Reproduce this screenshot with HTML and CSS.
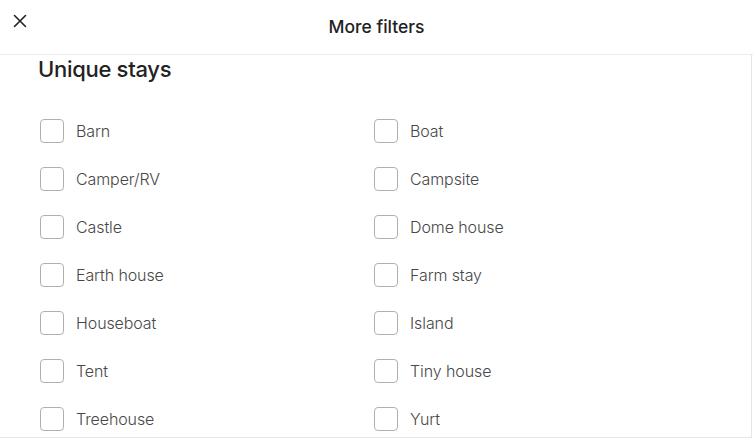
FILE: index.html
```html
<!DOCTYPE html>
<html>
<head>
<meta charset="utf-8">
<link rel="stylesheet" href="styles.css">
</head>
<body>
<div class="modal">
  <header class="header">
    <button class="close" aria-label="Close">
      <svg width="14" height="14" viewBox="0 0 14 14"><path d="M1.5 1.5 L12.5 12.5 M12.5 1.5 L1.5 12.5" stroke="#222" stroke-width="1.6" fill="none" stroke-linecap="round"/></svg>
    </button>
    <div class="title">More filters</div>
  </header>
  <section class="content">
    <h2 class="heading">Unique stays</h2>
    <div class="grid">
      <label class="item"><span class="box"></span><span class="text">Barn</span></label>
      <label class="item"><span class="box"></span><span class="text">Boat</span></label>
      <label class="item"><span class="box"></span><span class="text">Camper/RV</span></label>
      <label class="item"><span class="box"></span><span class="text">Campsite</span></label>
      <label class="item"><span class="box"></span><span class="text">Castle</span></label>
      <label class="item"><span class="box"></span><span class="text">Dome house</span></label>
      <label class="item"><span class="box"></span><span class="text">Earth house</span></label>
      <label class="item"><span class="box"></span><span class="text">Farm stay</span></label>
      <label class="item"><span class="box"></span><span class="text">Houseboat</span></label>
      <label class="item"><span class="box"></span><span class="text">Island</span></label>
      <label class="item"><span class="box"></span><span class="text">Tent</span></label>
      <label class="item"><span class="box"></span><span class="text">Tiny house</span></label>
      <label class="item"><span class="box"></span><span class="text">Treehouse</span></label>
      <label class="item"><span class="box"></span><span class="text">Yurt</span></label>
    </div>
  </section>
</div>
</body>
</html>
```

FILE: styles.css
```css
html, body {
  margin: 0;
  padding: 0;
  background: #fff;
}
body {
  font-family: "Inter", "Open Sans", "Liberation Sans", sans-serif;
  color: #222;
  overflow: hidden;
}
.modal {
  width: 753px;
  height: 443px;
  box-sizing: border-box;
}
.header {
  height: 54px;
  border-bottom: 1px solid #ebebeb;
  display: flex;
  align-items: center;
  justify-content: center;
  position: relative;
}
.close {
  position: absolute;
  left: 13px;
  top: 14px;
  width: 14px;
  height: 14px;
  padding: 0;
  border: 0;
  background: none;
  display: flex;
}
.title {
  font-size: 17.5px;
  font-weight: 500;
  color: #222;
  margin-top: -2px;
  letter-spacing: 0;
}
.content {
  width: 752px;
  height: 383px;
  box-sizing: border-box;
  border-right: 1px solid #e6e6e6;
  border-bottom: 1px solid #e6e6e6;
  padding: 0 0 0 38px;
}
.heading {
  margin: 0;
  padding-top: 2px;
  font-size: 22px;
  line-height: 24px;
  font-weight: 500;
  color: #222;
  letter-spacing: -0.3px;
}
.grid {
  display: grid;
  grid-template-columns: 334px 334px;
  grid-auto-rows: 48px;
  margin-top: 38px;
  margin-left: 2px;
}
.item {
  display: flex;
  align-items: flex-start;
  gap: 12px;
}
.box {
  width: 24px;
  height: 24px;
  box-sizing: border-box;
  border: 1px solid #b0b0b0;
  border-radius: 4px;
  flex: none;
}
.text {
  font-size: 16px;
  line-height: 24px;
  font-weight: 300;
  color: #484848;
  letter-spacing: -0.1px;
}
```
